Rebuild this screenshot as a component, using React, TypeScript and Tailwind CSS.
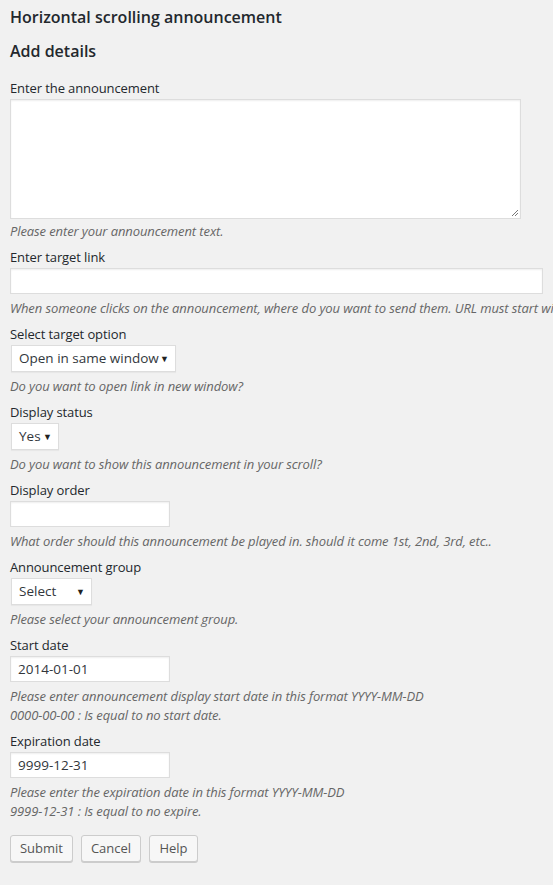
export default function App() {
  const label = "block text-[13px] leading-[20px] tracking-[-0.1px] text-[#23282d]";
  const desc = "italic text-[13px] leading-[19px] tracking-[-0.1px] text-[#666] whitespace-nowrap";
  const input = "block h-[26px] bg-white border border-[#ddd] shadow-[inset_0_1px_2px_rgba(0,0,0,0.07)] px-[7px] text-[13.5px] text-[#32373c]";
  const select = "flex items-center justify-between whitespace-nowrap h-[27px] bg-white border border-[#ddd] shadow-[0_1px_1px_rgba(0,0,0,0.04)] pl-[7px] pr-[6px] text-[13.5px] text-[#32373c]";
  const btn = "h-[27px] bg-[#f7f7f7] border border-[#ccc] rounded-[3px] shadow-[0_1px_0_#ccc] text-[13px] text-[#555]";
  const arrow = <span className="text-[9px] text-[#222]">▼</span>;

  return (
    <div className="w-[553px] min-h-[885px] overflow-hidden bg-[#f1f1f1] font-['Open_Sans',sans-serif] text-[#23282d] pl-[10px] pt-[6px]">
      <h2 className="text-[16px] leading-[22px] font-semibold">Horizontal scrolling announcement</h2>
      <h3 className="mt-[12px] text-[16px] leading-[22px] font-semibold">Add details</h3>

      <div className="mt-[16px]">
        <label className={label}>Enter the announcement</label>
        <div className="relative mt-[1px] w-[511px] h-[120px] bg-white border border-[#ddd] shadow-[inset_0_1px_2px_rgba(0,0,0,0.07)]">
          <svg className="absolute right-[1px] bottom-[1px]" width="9" height="9" viewBox="0 0 9 9">
            <path d="M8 2L2 8M8 5L5 8" stroke="#777" strokeWidth="1" />
          </svg>
        </div>
        <p className={desc + " mt-[3px]"}>Please enter your announcement text.</p>
      </div>

      <div className="mt-[6px]">
        <label className={label}>Enter target link</label>
        <div className={input + " mt-[1px] w-[533px]"} />
        <p className={desc + " mt-[5px]"}>When someone clicks on the announcement, where do you want to send them. URL must start with http://</p>
      </div>

      <div className="mt-[6px]">
        <label className={label}>Select target option</label>
        <div className={select + " mt-[1px] w-[165px] ml-[1px]"}>
          <span>Open in same window</span>
          {arrow}
        </div>
        <p className={desc + " mt-[5px]"}>Do you want to open link in new window?</p>
      </div>

      <div className="mt-[6px]">
        <label className={label}>Display status</label>
        <div className={select + " mt-[1px] w-[48px] ml-[1px]"}>
          <span>Yes</span>
          {arrow}
        </div>
        <p className={desc + " mt-[5px]"}>Do you want to show this announcement in your scroll?</p>
      </div>

      <div className="mt-[6px]">
        <label className={label}>Display order</label>
        <div className={input + " mt-[1px] w-[160px]"} />
        <p className={desc + " mt-[5px]"}>What order should this announcement be played in. should it come 1st, 2nd, 3rd, etc..</p>
      </div>

      <div className="mt-[6px]">
        <label className={label}>Announcement group</label>
        <div className={select + " mt-[1px] w-[81px] ml-[1px]"}>
          <span>Select</span>
          {arrow}
        </div>
        <p className={desc + " mt-[5px]"}>Please select your announcement group.</p>
      </div>

      <div className="mt-[6px]">
        <label className={label}>Start date</label>
        <div className={input + " mt-[1px] w-[160px] flex items-center"}>2014-01-01</div>
        <p className={desc + " mt-[5px]"}>Please enter announcement display start date in this format YYYY-MM-DD</p>
        <p className={desc}>0000-00-00 : Is equal to no start date.</p>
      </div>

      <div className="mt-[6px]">
        <label className={label}>Expiration date</label>
        <div className={input + " mt-[1px] w-[160px] flex items-center"}>9999-12-31</div>
        <p className={desc + " mt-[5px]"}>Please enter the expiration date in this format YYYY-MM-DD</p>
        <p className={desc}>9999-12-31 : Is equal to no expire.</p>
      </div>

      <div className="mt-[14px] flex gap-[8px]">
        <button className={btn + " w-[63px]"}>Submit</button>
        <button className={btn + " w-[60px]"}>Cancel</button>
        <button className={btn + " w-[49px]"}>Help</button>
      </div>
    </div>
  );
}
